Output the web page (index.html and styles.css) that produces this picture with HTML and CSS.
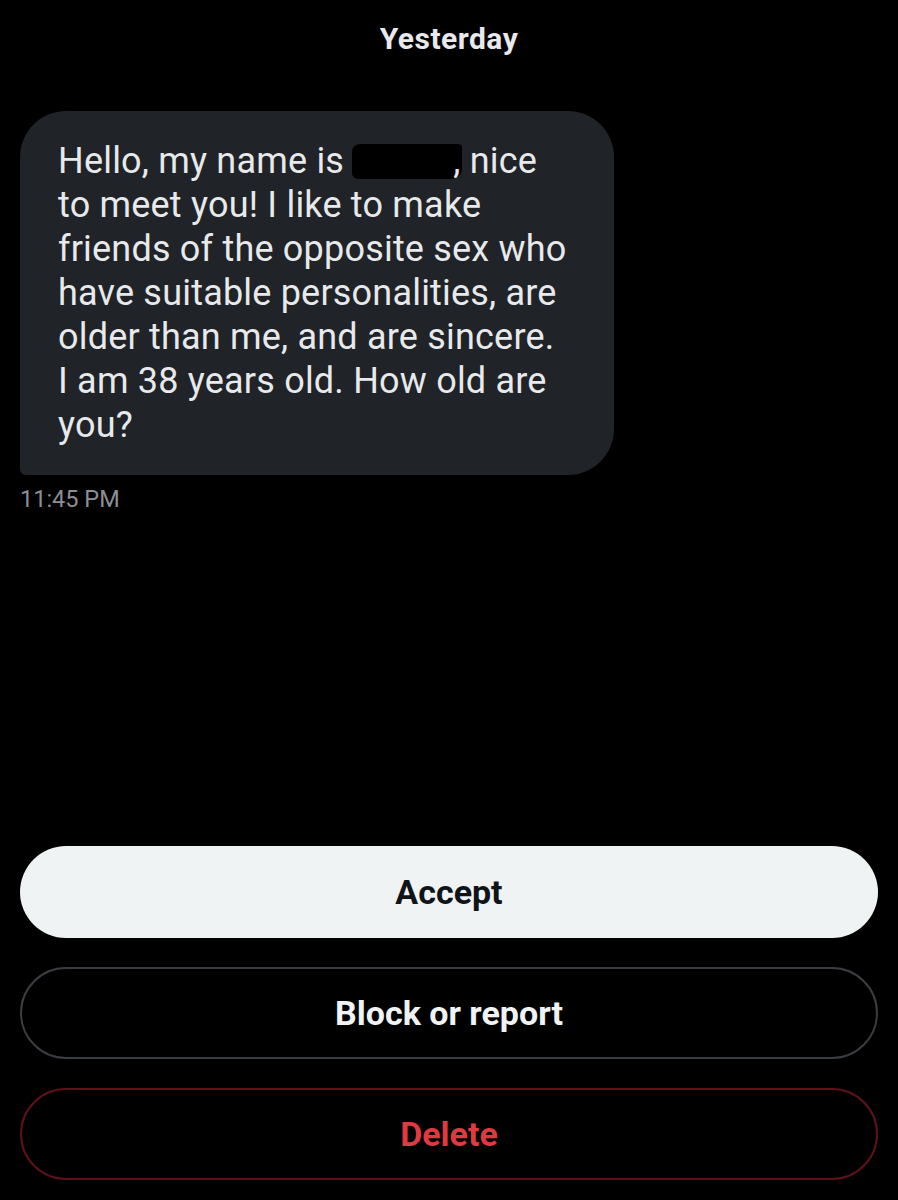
FILE: index.html
```html
<!DOCTYPE html>
<html lang="en">
<head>
    <meta charset="UTF-8">
    <meta name="viewport" content="width=device-width, initial-scale=1.0">
    <title>Message request</title>
    <link rel="stylesheet" href="styles.css">
</head>
<body>
    <div class="screen">
        <div class="day">Yesterday</div>

        <div class="message">
            <div class="bubble">
                Hello, my name is <span class="redacted"></span>, nice<br>
                to meet you! I like to make<br>
                friends of the opposite sex who<br>
                have suitable personalities, are<br>
                older than me, and are sincere.<br>
                I am 38 years old. How old are<br>
                you?
            </div>
            <div class="time">11:45 PM</div>
        </div>

        <div class="actions">
            <button class="btn btn-accept">Accept</button>
            <button class="btn btn-block">Block or report</button>
            <button class="btn btn-delete">Delete</button>
        </div>
    </div>
</body>
</html>
```

FILE: styles.css
```css
body {
    margin: 0;
    background-color: #000;
    font-family: Roboto, "Liberation Sans", sans-serif;
    color: #e7e9ea;
}
.screen {
    height: 1200px;
    box-sizing: border-box;
    padding: 0 20px 20px 20px;
    display: flex;
    flex-direction: column;
}
.day {
    text-align: center;
    font-weight: bold;
    font-size: 30px;
    letter-spacing: 0.5px;
    padding-top: 21px;
    color: #e7e9ea;
}
.message {
    margin-top: 55px;
}
.bubble {
    width: 594px;
    box-sizing: border-box;
    background-color: #202327;
    border-radius: 46px 46px 46px 6px;
    padding: 28px 20px 28px 38px;
    font-size: 36px;
    letter-spacing: 0.2px;
    line-height: 44px;
    white-space: nowrap;
    color: #e7e9ea;
}
.redacted {
    display: inline-block;
    width: 110px;
    height: 35px;
    margin-left: -1px;
    margin-right: -9px;
    vertical-align: -6px;
    background-color: #000;
    border-radius: 8px 4px 10px 6px;
}
.time {
    margin-top: 10px;
    font-size: 23.5px;
    color: #8b8f94;
}
.actions {
    margin-top: auto;
    display: flex;
    flex-direction: column;
    gap: 29px;
}
.btn {
    height: 92px;
    border-radius: 46px;
    font-family: Roboto, "Liberation Sans", sans-serif;
    font-weight: bold;
    font-size: 34px;
    background-color: #000;
    cursor: pointer;
}
.btn-accept {
    background-color: #eff3f4;
    border: none;
    color: #0f1419;
}
.btn-block {
    border: 2px solid #3a3d41;
    color: #eff3f4;
}
.btn-delete {
    border: 2px solid #5e1218;
    color: #df3a40;
}
```
